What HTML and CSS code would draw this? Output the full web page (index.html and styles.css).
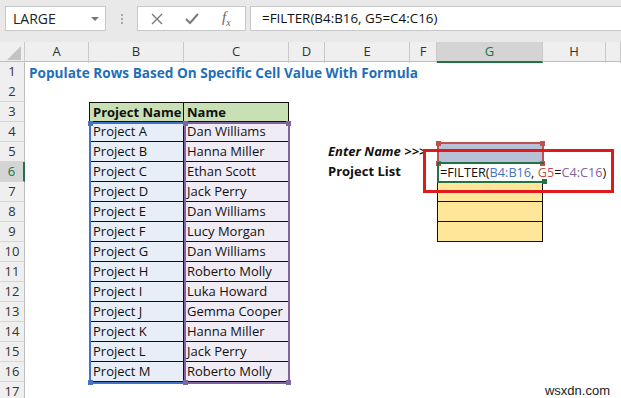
FILE: index.html
```html
<!DOCTYPE html>
<html lang="en">
<head>
  <meta charset="UTF-8">
  <title>FILTER formula</title>
  <link rel="stylesheet" href="styles.css">
</head>
<body>
  <div class="formula-area">
    <div class="name-box">
      <span>LARGE</span>
      <span class="caret"></span>
    </div>
    <div class="grip">
      <i></i><i></i><i></i>
    </div>
    <div class="fx-controls">
      <svg width="14" height="14" viewBox="0 0 14 14"><path d="M2 2 L12 12 M12 2 L2 12" stroke="#7a7a7a" stroke-width="1.4" fill="none"/></svg>
      <svg width="16" height="14" viewBox="0 0 16 14"><path d="M2 7 L6 11 L14 2" stroke="#7a7a7a" stroke-width="2" fill="none"/></svg>
      <span class="fx">f<sub>x</sub></span>
    </div>
    <div class="formula-bar">=FILTER(B4:B16, G5=C4:C16)</div>
  </div>

  <div class="sheet">
    <div class="row col-heads">
      <div class="corner"><span class="tri"></span></div>
      <div>A</div><div>B</div><div>C</div><div>D</div><div>E</div><div>F</div>
      <div class="sel">G</div><div>H</div><div></div>
    </div>

    <div class="row"><div class="rh">1</div><div class="title">Populate Rows Based On Specific Cell Value With Formula</div></div>
    <div class="row"><div class="rh">2</div></div>
    <div class="row"><div class="rh">3</div><div class="cell col-b head top">Project Name</div><div class="cell col-c head top">Name</div></div>
    <div class="row"><div class="rh">4</div><div class="cell col-b pb">Project A</div><div class="cell col-c pc">Dan Williams</div></div>
    <div class="row">
      <div class="rh">5</div><div class="cell col-b pb">Project B</div><div class="cell col-c pc">Hanna Miller</div>
      <div class="cell col-e label italic">Enter Name &gt;&gt;&gt;</div>
      <div class="cell col-g input-cell"></div>
    </div>
    <div class="row">
      <div class="rh active">6</div><div class="cell col-b pb">Project C</div><div class="cell col-c pc">Ethan Scott</div>
      <div class="cell col-e label">Project List</div>
      <div class="editing">=FILTER(<span class="ref-b">B4:B16</span>, <span class="ref-g">G5</span>=<span class="ref-c">C4:C16</span>)</div>
    </div>
    <div class="row"><div class="rh">7</div><div class="cell col-b pb">Project D</div><div class="cell col-c pc">Jack Perry</div><div class="cell col-g out"></div></div>
    <div class="row"><div class="rh">8</div><div class="cell col-b pb">Project E</div><div class="cell col-c pc">Dan Williams</div><div class="cell col-g out"></div></div>
    <div class="row"><div class="rh">9</div><div class="cell col-b pb">Project F</div><div class="cell col-c pc">Lucy Morgan</div><div class="cell col-g out"></div></div>
    <div class="row"><div class="rh">10</div><div class="cell col-b pb">Project G</div><div class="cell col-c pc">Dan Williams</div></div>
    <div class="row"><div class="rh">11</div><div class="cell col-b pb">Project H</div><div class="cell col-c pc">Roberto Molly</div></div>
    <div class="row"><div class="rh">12</div><div class="cell col-b pb">Project I</div><div class="cell col-c pc">Luka Howard</div></div>
    <div class="row"><div class="rh">13</div><div class="cell col-b pb">Project J</div><div class="cell col-c pc">Gemma Cooper</div></div>
    <div class="row"><div class="rh">14</div><div class="cell col-b pb">Project K</div><div class="cell col-c pc">Hanna Miller</div></div>
    <div class="row"><div class="rh">15</div><div class="cell col-b pb">Project L</div><div class="cell col-c pc">Jack Perry</div></div>
    <div class="row"><div class="rh">16</div><div class="cell col-b pb">Project M</div><div class="cell col-c pc">Roberto Molly</div></div>
    <div class="row"><div class="rh">17</div></div>

    <!-- range highlights drawn over the grid while editing -->
    <div class="range range-b"><i class="h tl"></i><i class="h bl"></i></div>
    <div class="range range-c"><i class="h tl"></i><i class="h tr"></i><i class="h bl"></i><i class="h br"></i></div>
    <div class="range range-g"><i class="h tl"></i><i class="h tr"></i><i class="h bl"></i><i class="h br"></i></div>
    <div class="active-cell"><i class="h br"></i></div>
    <div class="callout"></div>
    <div class="watermark">wsxdn.com</div>
  </div>
</body>
</html>
```

FILE: styles.css
```css
:root {
  --head-bg: #efefef;
  --head-line: #c9c9c9;
  --sel-bg: #d4d4d4;
  --excel-green: #217346;
  --ref-blue: #4472c4;
  --ref-red: #c0504d;
  --ref-purple: #8064a2;
}

* {
  margin: 0;
  padding: 0;
  box-sizing: border-box;
}

body {
  width: 621px;
  height: 398px;
  overflow: hidden;
  background: #fff;
  font-family: "Open Sans", sans-serif;
  color: #111;
}

/* Formula bar */
.formula-area {
  height: 42px;
  background: #e9e9e9;
  display: flex;
  align-items: flex-start;
  padding-top: 6px;
  padding-left: 5px;
}

.name-box {
  width: 101px;
  height: 25px;
  background: #fff;
  border: 1px solid #c8c8c8;
  display: flex;
  align-items: center;
  justify-content: space-between;
  padding: 0 6px 0 7px;
  font-size: 14px;
  color: #222;
}

.caret {
  width: 0;
  height: 0;
  border-left: 4px solid transparent;
  border-right: 4px solid transparent;
  border-top: 4px solid #777;
}

.grip {
  width: 31px;
  height: 25px;
  display: flex;
  flex-direction: column;
  align-items: center;
  justify-content: center;
  gap: 2px;
}

.grip i {
  width: 2px;
  height: 2px;
  background: #a8a8a8;
}

.fx-controls {
  width: 109px;
  height: 25px;
  background: #fff;
  border: 1px solid #c8c8c8;
  display: flex;
  align-items: center;
  padding-left: 12px;
  gap: 20px;
}

.fx {
  font-family: "Liberation Serif", serif;
  font-style: italic;
  font-size: 15px;
  color: #666;
  margin-left: 2px;
}

.fx sub {
  font-size: 10px;
}

.formula-bar {
  flex: 1;
  height: 25px;
  margin-left: 4px;
  background: #fff;
  border: 1px solid #c8c8c8;
  border-right: none;
  padding-left: 11px;
  font-size: 13.4px;
  line-height: 23px;
  color: #111;
}

/* Sheet grid */
.sheet {
  position: relative;
}

.row {
  display: grid;
  grid-template-columns: 25px 64px 95px 105px 36px 85px 27px 106px 63px 15px;
  height: 20px;
}

.col-heads {
  background: var(--head-bg);
  border-bottom: 1px solid #bdbdbd;
}

.col-heads div {
  border-right: 1px solid var(--head-line);
  text-align: center;
  font-size: 13px;
  line-height: 19px;
  color: #333;
}

.col-heads .sel {
  background: var(--sel-bg);
  color: var(--excel-green);
  border-bottom: 2px solid var(--excel-green);
}

.corner {
  position: relative;
}

.tri {
  position: absolute;
  right: 3px;
  bottom: 3px;
  width: 0;
  height: 0;
  border-left: 14px solid transparent;
  border-bottom: 14px solid #c3c3c3;
}

.rh {
  grid-column: 1;
  background: var(--head-bg);
  border-right: 1px solid #bdbdbd;
  border-bottom: 1px solid #d6d6d6;
  text-align: center;
  font-size: 13px;
  line-height: 19px;
  color: #333;
}

.rh.active {
  background: var(--sel-bg);
  color: var(--excel-green);
  border-right: 2px solid var(--excel-green);
}

.title {
  grid-column: 2 / 11;
  padding-left: 4px;
  font-size: 13.6px;
  font-weight: 700;
  line-height: 21px;
  color: #1f6fb8;
  white-space: nowrap;
}

.cell {
  font-size: 13px;
  line-height: 19px;
  padding-left: 3px;
  white-space: nowrap;
  border-bottom: 1px solid #111;
}

.col-b {
  grid-column: 3;
  border-left: 1px solid #111;
  border-right: 1px solid #111;
}

.col-c {
  grid-column: 4;
  border-right: 1px solid #111;
}

.col-e {
  grid-column: 6;
  border: none;
}

.col-g {
  grid-column: 8;
}

.top {
  border-top: 1px solid #111;
  line-height: 18px;
}

.head {
  background: #c9e0b5;
  font-weight: 700;
}

.pb {
  background: #e7eef8;
}

.pc {
  background: #f0ecf6;
}

.label {
  font-weight: 700;
  overflow: visible;
}

.italic {
  font-style: italic;
}

.input-cell {
  background: #b8c0d8;
  border: none;
}

.editing {
  grid-column: 8 / 11;
  padding-left: 3px;
  font-size: 12.7px;
  line-height: 20px;
  white-space: nowrap;
  color: #111;
}

.ref-b { color: var(--ref-blue); }
.ref-g { color: var(--ref-red); }
.ref-c { color: var(--ref-purple); }

.out {
  background: #ffe699;
  border-left: 1px solid #111;
  border-right: 1px solid #111;
}

/* Overlays */
.range {
  position: absolute;
  border: 2px solid;
}

.range-b {
  left: 89px;
  top: 80px;
  width: 97px;
  height: 262px;
  border-color: var(--ref-blue);
  color: var(--ref-blue);
}

.range-c {
  left: 184px;
  top: 80px;
  width: 106px;
  height: 262px;
  border-color: var(--ref-purple);
  color: var(--ref-purple);
}

.range-g {
  left: 437px;
  top: 100px;
  width: 107px;
  height: 21px;
  border-color: var(--ref-red);
  border-bottom: none;
  color: var(--ref-red);
}

.h {
  position: absolute;
  width: 5px;
  height: 5px;
  background: currentColor;
}

.tl { left: -3px; top: -3px; }
.tr { right: -3px; top: -3px; }
.bl { left: -3px; bottom: -3px; }
.br { right: -3px; bottom: -3px; }

.active-cell {
  position: absolute;
  left: 437px;
  top: 120px;
  width: 107px;
  height: 21px;
  border: 2px solid var(--excel-green);
  border-right: none;
  color: var(--excel-green);
  z-index: 2;
}

.callout {
  position: absolute;
  left: 423px;
  top: 107px;
  width: 191px;
  height: 44px;
  border: 3px solid #e01a1a;
  z-index: 3;
}

.watermark {
  position: absolute;
  right: 11px;
  bottom: 4px;
  font-family: "Liberation Sans", Arial, sans-serif;
  font-size: 13px;
  color: #222;
}
```
